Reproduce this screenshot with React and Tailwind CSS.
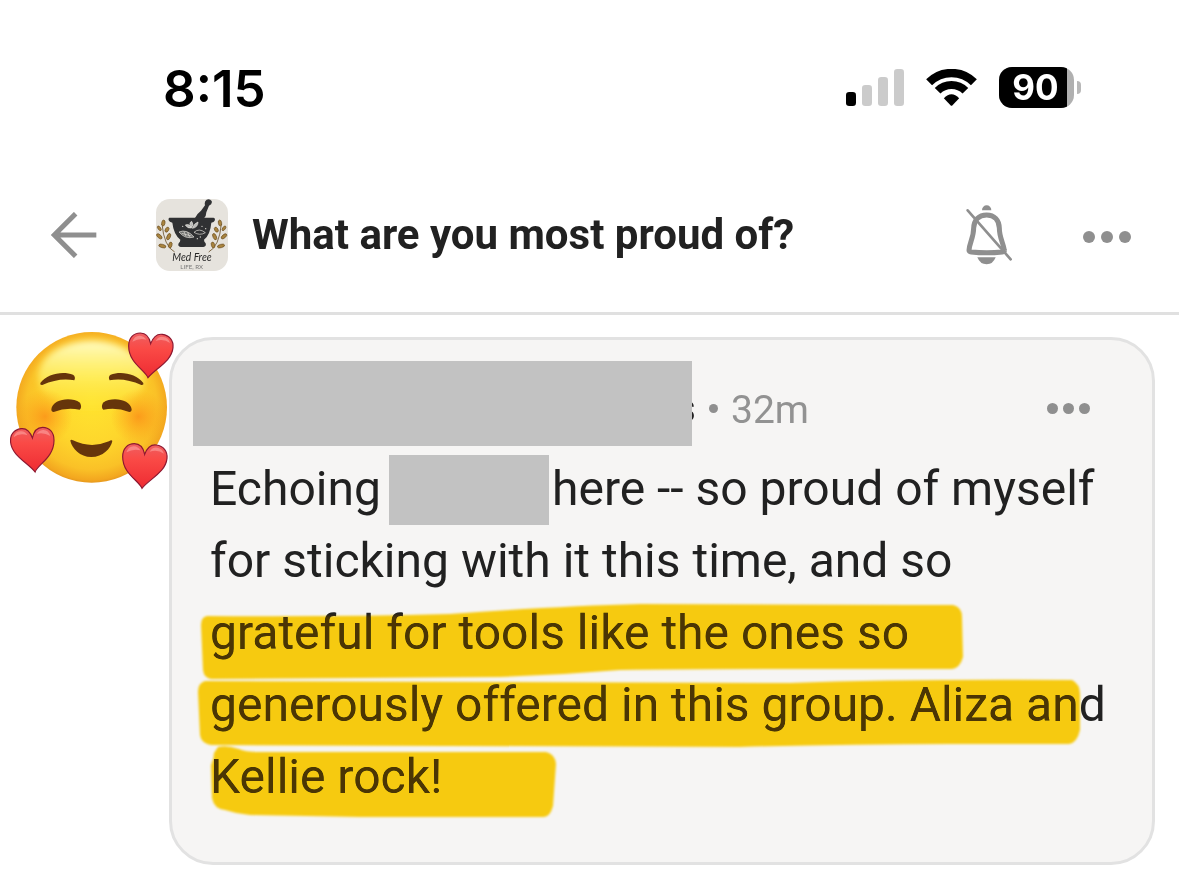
import React from 'react';

const GRAY = '#8f8f8f';

// --- BARRA DE ESTADO ---
const SignalIcon = () => (
    <svg className="h-[37px] w-[58px]" viewBox="0 0 58 37">
        <rect x="0" y="23" width="10" height="14" rx="3.2" fill="#000" />
        <rect x="16" y="16" width="10" height="21" rx="3.2" fill="#cbcbcb" />
        <rect x="32" y="8" width="10" height="29" rx="3.2" fill="#cbcbcb" />
        <rect x="48" y="0" width="10" height="37" rx="3.2" fill="#cbcbcb" />
    </svg>
);

const WifiIcon = () => (
    <svg className="ml-[22px] h-[37px] w-[51px]" viewBox="288 57 152 111">
        <g fill="none" stroke="#000">
            <path d="M296.8 96.8A95 95 0 0 1 431.2 96.8" strokeWidth="25" />
            <path d="M322.3 122.3A59 59 0 0 1 405.7 122.3" strokeWidth="24" />
        </g>
        <path d="M341 145Q364 120 387 145L367 166Q364 169 361 166Z" fill="#000" />
    </svg>
);

const Battery = () => (
    <div className="ml-[22px] flex items-center">
        <div className="flex h-[41px] w-[75px] items-center overflow-hidden rounded-[13px] bg-[#b0b0b0]">
            <span className="flex h-full w-[68px] items-center justify-center bg-black pl-[5px] font-[Inter] text-[35px] leading-none font-bold text-white">
                90
            </span>
        </div>
        <div className="ml-[3px] h-[13px] w-[4px] rounded-r-full bg-[#b8b8b8]" />
    </div>
);

const StatusBar = () => (
    <div className="flex h-[175px] items-center justify-between pr-[98px] pl-[163px]">
        <span className="pt-[2px] font-[Inter] text-[51px] leading-none font-semibold text-black">8:15</span>
        <div className="flex items-center">
            <SignalIcon />
            <WifiIcon />
            <Battery />
        </div>
    </div>
);

// --- CABECERA ---
const BackArrow = () => (
    <svg className="h-[46px] w-[46px]" viewBox="0 0 138 138" fill="none" stroke={GRAY} strokeWidth="15">
        <path d="M8 69H136M74 5L10 69L74 133" />
    </svg>
);

const Branch = () => (
    <g>
        <path d="M104 189Q72 172 66 105" fill="none" stroke="#6b522c" strokeWidth="2.5" />
        <g fill="#a9843f" stroke="#6b4d20" strokeWidth="2">
            <ellipse cx="70" cy="102" rx="5" ry="9" transform="rotate(10 70 102)" />
            <ellipse cx="58" cy="118" rx="4" ry="8" transform="rotate(-35 58 118)" />
            <ellipse cx="81" cy="122" rx="5" ry="8" transform="rotate(30 81 122)" />
            <ellipse cx="58" cy="142" rx="5" ry="10" transform="rotate(-48 58 142)" />
            <ellipse cx="86" cy="143" rx="5" ry="10" transform="rotate(24 86 143)" />
            <ellipse cx="67" cy="171" rx="5" ry="11" transform="rotate(-75 67 171)" />
            <ellipse cx="91" cy="168" rx="5" ry="9" transform="rotate(15 91 168)" />
        </g>
    </g>
);

const GroupLogo = () => (
    <svg className="ml-[59px] h-[72px] w-[72px] rounded-[14px]" viewBox="48 30 216 216">
        <rect x="48" y="30" width="216" height="216" fill="#e6e3dd" />
        <Branch />
        <g transform="matrix(-1 0 0 1 310 0)">
            <Branch />
        </g>
        <g fill="#303133">
            <path d="M165 87Q172 73 183 65L195 49Q192 37 200 32Q209 28 215 36Q218 46 207 50L199 70Q199 81 192 88Z" />
            <path d="M88 86H220Q227 87 224 95Q222 100 214 101Q211 137 192 152Q192 158 197 163Q200 173 190 174H122Q112 172 116 163Q121 158 121 152Q101 136 97 101Q88 100 86 94Q84 88 88 86Z" />
        </g>
        <g fill="#b9bab8" stroke="#e8e6e0" strokeWidth="2">
            <path d="M154 117Q142 119 136 108Q149 103 154 117Z" />
            <path d="M154 116Q145 102 155 97Q163 108 154 116Z" />
            <path d="M157 118Q161 104 174 99Q174 115 157 118Z" />
            <path d="M117 129Q140 119 162 144Q136 152 117 129Z" fill="#6d6e6d" />
            <path d="M162 130Q177 116 196 131Q179 141 162 130Z" fill="none" />
            <path d="M125 133L154 141M132 128L138 142M143 130L149 145" fill="none" />
        </g>
        <g fill="#dedbd4">
            <circle cx="186" cy="112" r="2" />
            <circle cx="197" cy="119" r="2" />
            <circle cx="128" cy="112" r="2" />
            <circle cx="172" cy="149" r="2" />
            <circle cx="181" cy="144" r="2" />
        </g>
        <text x="97" y="217" textLength="118" lengthAdjust="spacingAndGlyphs" className="font-[Lato] text-[36px] italic" fill="#252525">
            Med Free
        </text>
        <text x="121" y="241" textLength="68" lengthAdjust="spacingAndGlyphs" className="font-[Lato] text-[19px]" fill="#777">
            LIFE, RX
        </text>
    </svg>
);

const BellOff = () => (
    <svg className="h-[60px] w-[46px]" viewBox="79 44 138 180">
        <path d="M127 60A14 15 0 0 1 155 60Z" fill={GRAY} />
        <path d="M113 201H168Q160 222 141 222Q121 222 113 201Z" fill={GRAY} />
        <path
            d="M141 74C117 74 103 89 102 113C102 142 89 158 88 180Q88 184 95 185Q141 190 188 185Q195 184 194 180C191 158 179 142 179 113C178 89 164 74 141 74Z"
            fill="none"
            stroke={GRAY}
            strokeWidth="15"
        />
        <path d="M84 60L213 207" stroke={GRAY} strokeWidth="8" strokeLinecap="round" />
    </svg>
);

const Header = () => (
    <header className="flex h-[140px] items-center border-b-[3px] border-[#e0e0e0] pr-[48px] pb-[17px] pl-[51px]">
        <BackArrow />
        <GroupLogo />
        <h1 className="ml-[24px] flex-1 pb-px text-[42px] leading-none font-bold whitespace-nowrap text-[#212121]">
            What are you most proud of?
        </h1>
        <BellOff />
        <div className="mt-[3px] ml-[71px] flex gap-[6px]">
            <span className="size-[12px] rounded-full bg-[#8f8f8f]" />
            <span className="size-[12px] rounded-full bg-[#8f8f8f]" />
            <span className="size-[12px] rounded-full bg-[#8f8f8f]" />
        </div>
    </header>
);

// --- COMENTARIO ---
const Heart = ({ transform }) => (
    <g transform={transform}>
        <path
            d="M60 136C50 112 2 92 2 41C2 16 17 2 37 2C53 2 64 14 68 34C76 13 88 4 103 6C124 9 137 24 135 46C131 88 82 108 60 136Z"
            fill="url(#heart)"
            stroke="#8d1730"
            strokeWidth="3.5"
        />
        <path d="M13 28Q19 9 36 10Q49 11 55 22Q35 16 13 28ZM83 26Q92 11 106 14Q121 16 126 32Q107 18 83 26Z" fill="#ffaaa5" opacity=".55" />
    </g>
);

const HeartsEmoji = () => (
    <svg className="relative mt-[5px] -mr-[11px] size-[180px] shrink-0" viewBox="0 0 540 540">
        <defs>
            <radialGradient id="face" cx="50%" cy="48%" r="54%">
                <stop offset="0" stopColor="#ffe32f" />
                <stop offset=".5" stopColor="#fed62c" />
                <stop offset=".8" stopColor="#fac127" />
                <stop offset=".93" stopColor="#f3a71f" />
                <stop offset="1" stopColor="#d98a1b" />
            </radialGradient>
            <linearGradient id="shine" x1="0" y1="0" x2="0" y2="1">
                <stop offset="0" stopColor="#fffcc4" />
                <stop offset=".5" stopColor="#fff56e" stopOpacity=".7" />
                <stop offset="1" stopColor="#ffec3f" stopOpacity="0" />
            </linearGradient>
            <radialGradient id="blush">
                <stop offset="0" stopColor="#fb8a16" stopOpacity=".75" />
                <stop offset="1" stopColor="#fb9a16" stopOpacity="0" />
            </radialGradient>
            <linearGradient id="heart" x1="0" y1="0" x2="0" y2="1">
                <stop offset="0" stopColor="#ee6062" />
                <stop offset=".35" stopColor="#fa4a46" />
                <stop offset="1" stopColor="#ee2b32" />
            </linearGradient>
            <filter id="soft">
                <feGaussianBlur stdDeviation="9" />
            </filter>
        </defs>
        <circle cx="275" cy="262" r="226" fill="url(#face)" />
        <ellipse cx="275" cy="170" rx="160" ry="108" fill="url(#shine)" filter="url(#soft)" />
        <circle cx="135" cy="290" r="83" fill="url(#blush)" />
        <circle cx="415" cy="290" r="83" fill="url(#blush)" />
        <g fill="#66350b">
            <path d="M121 189C141 160 190 152 219 164Q228 170 223 181Q178 172 127 195Q119 196 121 189Z" />
            <path d="M430 189C410 160 361 152 332 164Q323 170 329 181Q373 172 424 195Q432 196 430 189Z" />
            <path d="M154 268C158 238 212 229 240 248Q247 262 239 269Q199 261 161 276Q154 276 154 268Z" />
            <path d="M395 268C391 238 337 229 309 248Q302 262 310 269Q350 261 388 276Q395 276 395 268Z" />
            <path d="M211 362C216 385 240 411 274 411C309 411 332 386 337 363Q335 358 327 364Q273 387 219 361Q212 357 211 362Z" />
        </g>
        <Heart transform="translate(384 37)" />
        <Heart transform="matrix(-.98 0 0 1 164 320)" />
        <Heart transform="translate(366 369)" />
    </svg>
);

// Trazos del marcador, en coordenadas de la tarjeta
const MARKER = [
    'M207 616Q340 617 450 614Q560 606 640 604L908 605H953Q962 607 962 617L963 657Q960 668 952 669L780 669Q690 669 620 670Q560 675 500 677L211 679Q204 678 203 670L201 625Q201 617 207 616Z',
    'M205 681L500 682L790 683Q900 679 1072 680Q1080 684 1080 694L1080 730Q1077 743 1069 744L950 744Q850 744 740 747L211 745Q201 743 200 735L198 692Q198 683 205 681Z',
    'M218 747Q227 745 239 749Q245 752 260 752L546 752Q555 754 556 764L553 806Q550 817 544 817L360 817L250 815Q237 814 225 810Q214 809 212 798L211 765Q214 759 214 753Z',
];

const Marker = ({ className, fill }) => (
    <svg className={`pointer-events-none absolute top-0 left-0 h-[400px] w-[950px] ${className}`} viewBox="193 453 950 400">
        <g fill={fill}>
            {MARKER.map((d) => (
                <path key={d} d={d} />
            ))}
        </g>
    </svg>
);

const CommentCard = () => (
    <article className="mt-[22px] h-[528px] w-[986px] rounded-[44px] border-[3px] border-[#e2e2e2] bg-[#f6f5f4] pt-[21px] pl-[21px]">
        <div className="flex h-[85px] items-center">
            {/* El bloque gris tapa casi todo el nombre */}
            <div className="z-10 h-full w-[499px] bg-[#c2c2c2]" />
            <span className="-ml-[17px] w-[20px] pt-[11px] text-right text-[40px] leading-none font-medium text-[#212121]">s</span>
            <span className="mt-[9px] ml-[14px] size-[9px] rounded-full bg-[#8f8f8f]" />
            <span className="ml-[13px] pt-[13px] text-[39px] leading-none text-[#929292]">32m</span>
            <div className="mt-[10px] ml-auto mr-[62px] flex gap-[5px]">
                <span className="size-[11px] rounded-full bg-[#8f8f8f]" />
                <span className="size-[11px] rounded-full bg-[#8f8f8f]" />
                <span className="size-[11px] rounded-full bg-[#8f8f8f]" />
            </div>
        </div>
        <div className="relative mt-[7px] pl-[17px] text-[48px] leading-[72px] whitespace-nowrap text-[#212121]">
            <div className="flex h-[72px]">
                <span className="w-[179px]">Echoing</span>
                <span className="mt-[2px] mr-[3px] h-[70px] w-[160px] bg-[#c2c2c2]" />
                <span>here -- so proud of myself</span>
            </div>
            <p>for sticking with it this time, and so</p>
            <p>grateful for tools like the ones so</p>
            <p>generously offered in this group. Aliza and</p>
            <p>Kellie rock!</p>
            <Marker className="mix-blend-multiply blur-[1px]" fill="#ffd310" />
            <Marker className="mix-blend-lighten blur-[1px]" fill="#4b3504" />
        </div>
    </article>
);

const App = () => (
    <div className="h-[893px] w-[1179px] overflow-hidden bg-white font-[Roboto,sans-serif]">
        <StatusBar />
        <Header />
        <main className="flex items-start">
            <HeartsEmoji />
            <CommentCard />
        </main>
    </div>
);

export default App;
